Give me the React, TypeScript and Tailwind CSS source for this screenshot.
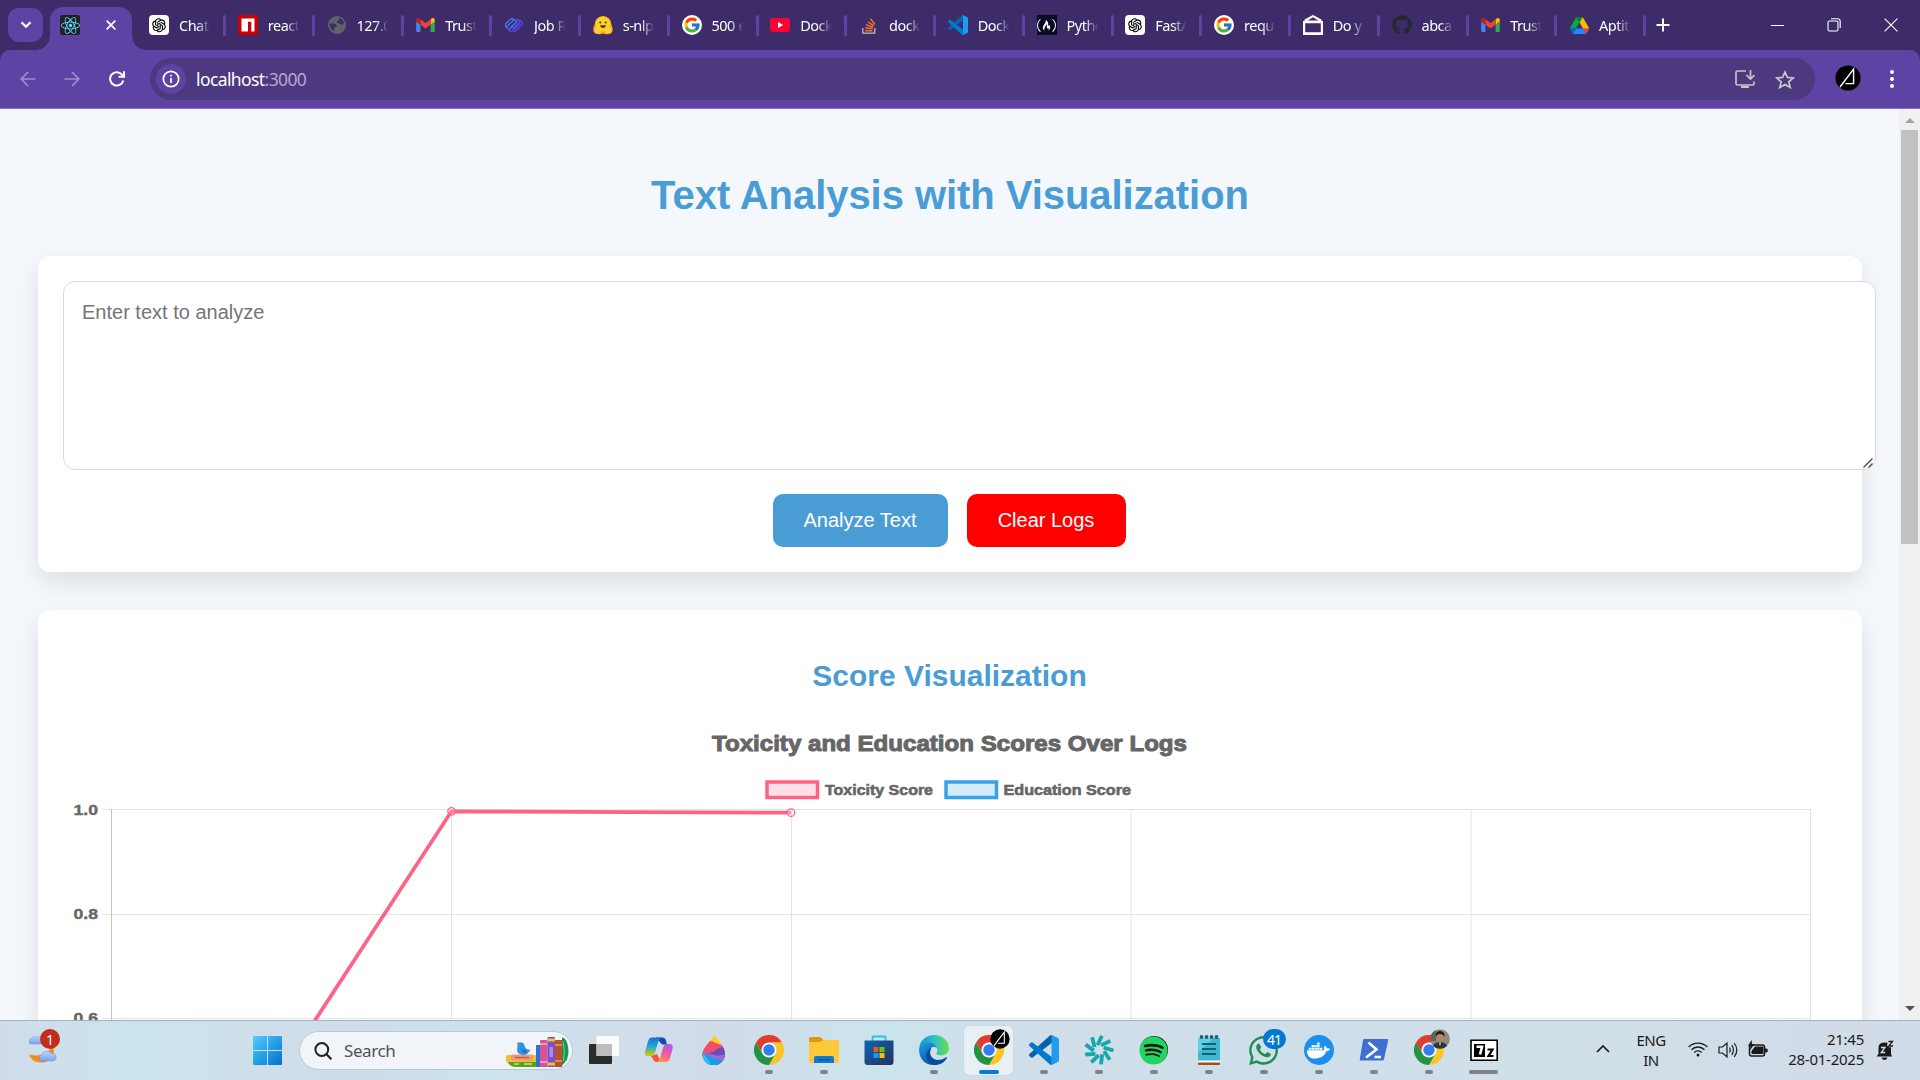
import type { ReactNode } from "react";
import { FaReact, FaGithub, FaDocker, FaSpotify, FaWhatsapp, FaFreeCodeCamp } from "react-icons/fa";
import { FcGoogle } from "react-icons/fc";
import { AiOutlineOpenAI } from "react-icons/ai";

/* ---------- brand icons ---------- */

const Gmail = () => (
  <svg viewBox="52 42 88 66" className="h-[14px] w-[19px]">
    <path fill="#4285f4" d="M58 108h14V74L52 59v43c0 3.32 2.69 6 6 6" />
    <path fill="#34a853" d="M120 108h14c3.32 0 6-2.69 6-6V59l-20 15" />
    <path fill="#fbbc04" d="M120 48v26l20-15v-8c0-7.42-8.47-11.65-14.4-7.2" />
    <path fill="#ea4335" d="M72 74V48l24 18 24-18v26L96 92" />
    <path fill="#c5221f" d="M52 51v8l20 15V48l-5.6-4.2c-5.94-4.45-14.4-.22-14.4 7.2" />
  </svg>
);

const Drive = () => (
  <svg viewBox="0 0 87.3 78" className="h-[17px] w-[19px]">
    <path fill="#0066da" d="m6.6 66.85 3.85 6.65c.8 1.4 1.95 2.5 3.3 3.3l13.75-23.8h-27.5c0 1.55.4 3.1 1.2 4.5z" />
    <path fill="#00ac47" d="m43.65 25-13.75-23.8c-1.35.8-2.5 1.9-3.3 3.3l-25.4 44a9.06 9.06 0 0 0-1.2 4.5h27.5z" />
    <path fill="#ea4335" d="m73.55 76.8c1.35-.8 2.5-1.9 3.3-3.3l1.6-2.75 7.65-13.25c.8-1.4 1.2-2.95 1.2-4.5h-27.502l5.852 11.5z" />
    <path fill="#00832d" d="m43.65 25 13.75-23.8c-1.35-.8-2.9-1.2-4.5-1.2h-18.5c-1.6 0-3.15.45-4.5 1.2z" />
    <path fill="#2684fc" d="m59.8 53h-32.3l-13.75 23.8c1.35.8 2.9 1.2 4.5 1.2h50.8c1.6 0 3.15-.45 4.5-1.2z" />
    <path fill="#ffba00" d="m73.4 26.5-12.7-22c-.8-1.4-1.95-2.5-3.3-3.3l-13.75 23.8 16.15 28h27.45c0-1.55-.4-3.1-1.2-4.5z" />
  </svg>
);

const VsCode = ({ className }: { className: string }) => (
  <svg viewBox="0 0 100 100" className={className}>
    <path fill="#0065a9" d="M96.5 10.6 75.9.9a6.2 6.2 0 0 0-7.1 1.2L1.3 63.6a4.2 4.2 0 0 0 0 6.1l5.5 5a4.2 4.2 0 0 0 5.3.2L93.4 13.4c2.7-2.1 6.6-.1 6.6 3.3v-.2c0-2.5-1.4-4.7-3.5-5.9z" />
    <path fill="#007acc" d="M96.5 89.4 75.9 99.1a6.2 6.2 0 0 1-7.1-1.2L1.3 36.4a4.2 4.2 0 0 1 0-6.1l5.5-5a4.2 4.2 0 0 1 5.3-.2L93.4 86.6c2.7 2.1 6.6.1 6.6-3.3v.2c0 2.5-1.4 4.7-3.5 5.9z" />
    <path fill="#1f9cf0" d="M75.9 99.1a6.2 6.2 0 0 1-7.1-1.2c2.3 2.3 6.2.7 6.2-2.6V4.7c0-3.3-3.9-4.9-6.2-2.6a6.2 6.2 0 0 1 7.1-1.2l20.6 9.9a6.2 6.2 0 0 1 3.5 5.6v67.2a6.2 6.2 0 0 1-3.5 5.6z" />
  </svg>
);

const Chrome = () => (
  <svg viewBox="0 0 48 48" className="size-[30px]">
    <path fill="#e33b2e" d="M3.2 12A24 24 0 0 1 44.8 12H24A12 12 0 0 0 13.6 30Z" />
    <path fill="#fdc521" d="M44.8 12A24 24 0 0 1 24 48L34.4 30A12 12 0 0 0 24 12Z" />
    <path fill="#229342" d="M3.2 12A24 24 0 0 0 24 48L34.4 30A12 12 0 0 1 13.6 30Z" />
    <circle cx="24" cy="24" r="11.6" fill="#fff" />
    <circle cx="24" cy="24" r="9.2" fill="#327df2" />
  </svg>
);

const OpenAi = () => (
  <span className="flex size-5 items-center justify-center rounded-[4px] bg-white">
    <AiOutlineOpenAI className="size-[18px] text-black" />
  </span>
);

const GoogleG = () => (
  <span className="flex size-5 items-center justify-center rounded-full bg-white">
    <FcGoogle className="size-[18px]" />
  </span>
);

const Npm = () => (
  <svg viewBox="0 0 20 20" className="size-5">
    <path fill="#cb0000" d="M0 0h20v20H0z" />
    <path fill="#fff" d="M3.5 3.5h13v13h-3.2V6.800H10v9.700H3.500z" />
  </svg>
);

const Globe = () => (
  <svg viewBox="0 0 20 20" className="size-5">
    <circle cx="10" cy="10" r="9" fill="#5f6368" />
    <path fill="#3d2c69" d="M2.500 8.500H7q1.500 0 2.500 1.500t-.5 2H7.500v2.500q0 1-1.500 1-3.500-2-3.500-7zM11.500 2.800c2.800.4 5 2.600 5.500 5.700l-1.500 1.300q-1 .5-1.800-.8-.7-1-2.200-.8-1.700.2-1.700-1.200t1.200-1.500q1 0 .8-1.200z" />
  </svg>
);

const Ribbon = () => (
  <svg viewBox="0 0 20 20" className="size-5" fill="none" strokeWidth="1.400" strokeLinecap="round">
    <path stroke="#4277e4" d="M1.500 9 6.500 4.200a2.200 2.200 0 0 1 3 .1M3 11.500 9.500 5.200a1.700 1.700 0 0 1 2.400 2.400L6.500 12.800M1.500 9q-.6 2 1.500 4M5 14.500l3.500-3.200" />
    <path stroke="#5646e6" d="M13.500 4.500a2 2 0 0 1 1.500 3L8.500 13.800M16 6a2.400 2.400 0 0 1 1.800 3.800l-6 5.700a2.200 2.200 0 0 1-3.200.2M10.300 14l5.500-5.200M4.500 13.500a2 2 0 0 0 3 2.300" />
  </svg>
);

const HuggingFace = () => (
  <svg viewBox="0 0 20 20" className="size-5">
    <path fill="#f5b31c" d="M10 1a8.200 8.200 0 0 1 8.300 8.600c1.200 2.500 2 5 .9 7.400-1.500 2.600-6.600 2.700-9.200 1.200-2.600 1.500-7.700 1.400-9.200-1.200-1.100-2.400-.3-4.900.9-7.400A8.200 8.200 0 0 1 10 1z" />
    <circle cx="10" cy="9" r="7.200" fill="#ffd21e" />
    <path fill="#ffcf3a" d="M1.500 14.500 4 11l4.500 4.500L7 18.200H3zM18.500 14.500 16 11l-4.500 4.500 1.500 2.700h4z" />
    <path fill="#3a3b45" d="M7.200 10.300h5.600c0 1.600-1.200 2.700-2.800 2.700s-2.800-1.100-2.800-2.700z" />
    <circle cx="7.300" cy="7.500" r="1.100" fill="#3a3b45" />
    <circle cx="12.700" cy="7.500" r="1.100" fill="#3a3b45" />
  </svg>
);

const YouTube = () => (
  <svg viewBox="0 0 20 20" className="size-5">
    <rect y="3" width="20" height="14" rx="3.200" fill="#ff0033" />
    <path fill="#fff" d="M8 7v6l5.200-3z" />
  </svg>
);

const StackOverflow = () => (
  <svg viewBox="0 0 20 20" className="size-5" fill="none">
    <path stroke="#bcbbbb" strokeWidth="1.300" d="M3.800 13v5.200h12V13" />
    <path stroke="#e9702a" strokeWidth="1.600" d="M6 15.800h7.500M6.200 12.900l7.400.9M7 9.800l7 2.400M9 6.800l5.800 4M11.500 3.800l4.500 5.600" />
  </svg>
);

const FreeCodeCamp = () => (
  <span className="flex size-5 items-center justify-center bg-[#0a0a23]">
    <FaFreeCodeCamp className="size-[19px] text-white" />
  </span>
);

const Envelope = () => (
  <svg viewBox="0 0 20 20" className="size-5">
    <path fill="#fff" fillRule="evenodd" d="M10 0l8.500 4.500V6H20v14H0V6h1.500V4.500zM10 2.200 4.500 5.600h11zM2.200 8.300v8.900h15.600V8.300z" />
  </svg>
);

/* Black round avatar with a thin triangular mark */
const Avatar = ({ className }: { className: string }) => (
  <svg viewBox="0 0 26 26" className={className}>
    <circle cx="13" cy="13" r="12.600" fill="#000" />
    <path d="M5 22 18.600 4v14.600H10.500" fill="none" stroke="#fff" strokeWidth="1.400" />
  </svg>
);

/* ---------- tab strip ---------- */

const tabs: { title: string; icon: ReactNode }[] = [
  { title: "ChatG", icon: <OpenAi /> },
  { title: "react", icon: <Npm /> },
  { title: "127.0", icon: <Globe /> },
  { title: "Trust", icon: <Gmail /> },
  { title: "Job R", icon: <Ribbon /> },
  { title: "s-nlp", icon: <HuggingFace /> },
  { title: "500 e", icon: <GoogleG /> },
  { title: "Dock", icon: <YouTube /> },
  { title: "dock", icon: <StackOverflow /> },
  { title: "Dock", icon: <VsCode className="size-5" /> },
  { title: "Pytho", icon: <FreeCodeCamp /> },
  { title: "FastA", icon: <OpenAi /> },
  { title: "requ", icon: <GoogleG /> },
  { title: "Do y", icon: <Envelope /> },
  { title: "abca", icon: <FaGithub className="size-5 text-[#24292f]" /> },
  { title: "Trust", icon: <Gmail /> },
  { title: "Aptit", icon: <Drive /> },
];

const TabStrip = () => (
  <div className="flex h-[50px] bg-[#3d2c69]">
    <div className="ml-2 mt-2 flex h-[34px] w-[35px] items-center justify-center rounded-[11px] bg-[#5d43a4]">
      <svg viewBox="0 0 12 8" className="h-[8px] w-[12px]" fill="none" stroke="#fff" strokeWidth="2.200">
        <path d="m1.500 1.200 4.500 4.500 4.500-4.500" />
      </svg>
    </div>
    <div className="relative ml-[7px] mt-[7px] flex h-[43px] w-[82px] items-start rounded-t-[13px] bg-[#5d43a4] pl-[10px] pt-2">
      <span className="absolute -left-[14px] bottom-0 size-[14px] bg-[radial-gradient(circle_at_0_0,transparent_13.500px,#5d43a4_14px)]" />
      <span className="absolute -right-[14px] bottom-0 size-[14px] bg-[radial-gradient(circle_at_100%_0,transparent_13.500px,#5d43a4_14px)]" />
      <span className="flex size-5 items-center justify-center rounded-[2px] bg-[#222]">
        <FaReact className="size-[19px] text-[#61dafb]" />
      </span>
      <svg viewBox="0 0 10 10" className="ml-[26px] mt-[5px] size-[10px]" stroke="#fff" strokeWidth="1.800">
        <path d="m.6.6 8.800 8.800M9.400.6.600 9.400" />
      </svg>
    </div>
    <div className="ml-[17px] flex pt-[15px]">
      {tabs.map((tab, i) => (
        <div key={i} className="flex w-[88.750px]">
          <span className="flex size-5 shrink-0 items-center justify-center">{tab.icon}</span>
          <span className="ml-[10px] w-[32px] overflow-hidden whitespace-nowrap font-['Noto_Sans',sans-serif] text-[14.500px] leading-[21px] tracking-[-0.500px] text-white [mask-image:linear-gradient(to_right,#000_55%,transparent_98%)]">
            {tab.title}
          </span>
          <span className="ml-[12px] h-[21px] w-[3px] rounded-full bg-[#5d43a4]" />
        </div>
      ))}
    </div>
    <svg viewBox="0 0 14 14" className="-ml-[2px] mt-[18px] size-[14px]" stroke="#fff" strokeWidth="2">
      <path d="M7 .5v13M.5 7h13" />
    </svg>
    <div className="ml-auto flex items-center gap-[43px] pr-[22px]">
      <span className="h-px w-[13px] bg-white" />
      <svg viewBox="0 0 14 14" className="size-[14px]" fill="none" stroke="#fff" strokeWidth="1.100">
        <rect x="1" y="3" width="10" height="10" rx="1.500" />
        <path d="M4 .8h6.500A2.700 2.700 0 0 1 13.200 3.500V10" />
      </svg>
      <svg viewBox="0 0 14 14" className="size-[14px]" stroke="#fff" strokeWidth="1.100">
        <path d="m.6.600 12.800 12.800M13.400.6.600 13.400" />
      </svg>
    </div>
  </div>
);

/* ---------- toolbar ---------- */

const Toolbar = () => (
  <div className="bg-[#3d2c69]">
    <div className="flex h-[59px] items-start rounded-t-[10px] border-b border-[#8a6fc0] bg-[#5d43a4] pt-2">
      <svg viewBox="0 0 16 16" className="ml-5 mt-[13px] size-4" fill="none" stroke="#a08dcb" strokeWidth="1.700">
        <path d="M15.500 8H1.500M8 1 1.200 8 8 15" />
      </svg>
      <svg viewBox="0 0 16 16" className="ml-[28px] mt-[13px] size-4" fill="none" stroke="#a08dcb" strokeWidth="1.700">
        <path d="M.5 8h14M8 1l6.800 7L8 15" />
      </svg>
      <svg viewBox="0 0 16 16" className="ml-[29px] mt-[13px] size-4" fill="none" stroke="#fff" strokeWidth="2">
        <path d="M14.300 9.500A6.700 6.700 0 1 1 13 3.600l1.500 1.600" />
        <path d="M15 .3v5.500H9.500" />
      </svg>
      <div className="ml-[25px] flex h-[42px] w-[1665px] items-center rounded-full bg-[#4c397f] pl-[6px]">
        <span className="flex size-[30px] items-center justify-center rounded-full bg-[#5d43a4]">
          <svg viewBox="0 0 18 18" className="size-[18px]" fill="none" stroke="#fff" strokeWidth="1.700">
            <circle cx="9" cy="9" r="7.700" />
            <path d="M9 8v5M9 4.800v1.800" />
          </svg>
        </span>
        <span className="ml-[10px] mt-px font-['Noto_Sans',sans-serif] text-[17.500px] tracking-[-0.600px] text-white">
          localhost<span className="text-[#b5a8d4]">:3000</span>
        </span>
        <svg viewBox="0 0 20 18" className="ml-auto h-[18px] w-5" fill="none" stroke="#c7c5c5" strokeWidth="1.700">
          <path d="M11 1H2.500Q1 1 1 2.500v11Q1 15 2.500 15h15q1.500 0 1.500-1.500V11.500M15.500 0v8.500M11.500 5l4 4 4-4" />
          <path d="M6 16h8v2H6z" fill="#c7c5c5" stroke="none" />
        </svg>
        <svg viewBox="0 0 20 19" className="ml-5 mr-5 h-[19px] w-5" fill="none" stroke="#c7c5c5" strokeWidth="1.700">
          <path d="m10 2 2.400 5.400 5.900.5-4.500 3.900 1.400 5.700L10 14.400l-5.200 3.100 1.400-5.700L1.700 7.900l5.900-.5z" />
        </svg>
      </div>
      <Avatar className="ml-5 mt-[7px] size-[26px]" />
      <div className="ml-[29px] mt-3 flex flex-col gap-[3px]">
        <span className="size-1 rounded-full bg-white" />
        <span className="size-1 rounded-full bg-white" />
        <span className="size-1 rounded-full bg-white" />
      </div>
    </div>
  </div>
);

/* ---------- chart ---------- */

const gridX = [111.5, 451.5, 791.5, 1131, 1471, 1810.5];
const gridY = [809.5, 914.5, 1018.5];
const heavy = {
  fontFamily: '"Liberation Sans", Arial, sans-serif',
  fontWeight: 700,
  fill: "#666",
  stroke: "#666",
  lengthAdjust: "spacingAndGlyphs",
} as const;

const ScoreChart = () => (
  <svg viewBox="63 720 1774 320" className="h-[320px] w-[1774px]">
    <text x="712" y="751" fontSize="22.500" textLength="475" strokeWidth="1" {...heavy}>
      Toxicity and Education Scores Over Logs
    </text>
    <rect x="767" y="782" width="50.500" height="15.500" fill="#ffe0e6" stroke="#ff6384" strokeWidth="3.500" />
    <text x="825" y="795" fontSize="15" textLength="108" strokeWidth="0.600" {...heavy}>
      Toxicity Score
    </text>
    <rect x="946" y="782" width="50.500" height="15.500" fill="#d7ecfb" stroke="#36a2eb" strokeWidth="3.500" />
    <text x="1003.500" y="795" fontSize="15" textLength="127.500" strokeWidth="0.600" {...heavy}>
      Education Score
    </text>
    {gridY.map((y) => (
      <path key={y} d={`M102 ${y}H1811`} stroke="#e3e3e3" />
    ))}
    {gridX.map((x) => (
      <path key={x} d={`M${x} 809V1040`} stroke={x === 111.5 ? "#c4c4c4" : "#e3e3e3"} />
    ))}
    {["1.0", "0.8", "0.6"].map((label, i) => (
      <text key={label} x="73.500" y={815 + i * 104.1} fontSize="15" textLength="24.500" strokeWidth="0.400" {...heavy}>
        {label}
      </text>
    ))}
    <path d="M111.500 1332 451.500 811.300 791 812.700" fill="none" stroke="#ff6384" strokeWidth="3.750" />
    <circle cx="451.500" cy="811.300" r="3.750" fill="#ffe0e6" fillOpacity="0.200" stroke="#ff6384" strokeWidth="1.250" />
    <circle cx="791" cy="812.700" r="3.750" fill="#ffe0e6" fillOpacity="0.400" stroke="#ff6384" strokeWidth="1.250" />
  </svg>
);

/* ---------- page ---------- */

const Page = () => (
  <div className="flex h-[911px] overflow-hidden bg-[#f4f8fd] font-['Liberation_Sans',Arial,sans-serif]">
    <main className="flex h-[911px] w-[1899px] flex-col overflow-hidden px-[38px] pt-[63px]">
      <h1 className="pl-px text-center text-[40px] font-bold leading-[46px] tracking-[-0.050px] text-[#4a9cd5]">
        Text Analysis with Visualization
      </h1>
      <section className="mt-[38px] h-[316px] w-[1824px] shrink-0 rounded-[12px] bg-white px-[25px] pt-[25px] shadow-[0_10px_25px_rgba(0,0,0,0.1)]">
        <div className="relative w-[1813px]">
          <textarea
            placeholder="Enter text to analyze"
            className="block h-[189px] w-[1813px] resize-none rounded-[12px] border border-[#dadada] bg-white px-[18px] pt-[19px] text-[20px] leading-[23px] placeholder:text-[#757575]"
          />
          <svg viewBox="0 0 10 10" className="absolute bottom-[2px] right-[3px] size-[10px]" fill="none" stroke="#4a4a4a" strokeWidth="1.400">
            <path d="M.5 9.500 9.500.500M5.500 9.500l4-4" />
          </svg>
        </div>
        <div className="mt-6 flex justify-center gap-[19px] pr-[2px]">
          <button className="h-[53px] w-[175px] rounded-[10px] bg-[#4a9cd5] pb-[2px] text-[20px] text-white">Analyze Text</button>
          <button className="h-[53px] w-[159px] rounded-[10px] bg-[#ff0000] pb-[2px] text-[20px] text-white">Clear Logs</button>
        </div>
      </section>
      <section className="mt-[38px] h-[700px] w-[1824px] shrink-0 rounded-[12px] bg-white px-[25px] pt-[48px] shadow-[0_10px_25px_rgba(0,0,0,0.1)]">
        <h2 className="pr-px text-center text-[30px] font-bold leading-[35px] text-[#4a9cd5]">Score Visualization</h2>
        <div className="mt-[27px]">
          <ScoreChart />
        </div>
      </section>
    </main>
    <div className="flex w-[21px] flex-col items-center bg-[#f0f0f0]">
      <svg viewBox="0 0 10 5" className="mt-[9px] h-[5px] w-[10px]">
        <path fill="#a3a3a3" d="M0 5 5 0l5 5z" />
      </svg>
      <div className="mt-[7px] h-[414px] w-[17px] bg-[#c1c1c1]" />
      <svg viewBox="0 0 10 5" className="mb-[9px] mt-auto h-[5px] w-[10px]">
        <path fill="#505050" d="M0 0h10L5 5z" />
      </svg>
    </div>
  </div>
);

/* ---------- taskbar icons ---------- */

const Weather = () => (
  <svg viewBox="0 0 34 34" className="size-[34px]">
    <defs>
      <linearGradient id="cloud" x1="0" y1="0" x2="0" y2="1">
        <stop offset="0" stopColor="#b9d3fb" />
        <stop offset="1" stopColor="#7da4ec" />
      </linearGradient>
    </defs>
    <path fill="#f08c17" d="M28 9c3 10-2 17.500-12 17.500-6 0-10-3-12-8 11 3 20-1 24-9.500z" />
    <path fill="url(#cloud)" stroke="#6b93df" strokeWidth="0.500" d="M4.500 8a4 4 0 0 1 2.500-5A6 6 0 0 1 16 1.500l2 6.500-3 1H5a4 4 0 0 1-.5-1z" transform="translate(0 -1)" />
    <path fill="url(#cloud)" stroke="#6b93df" strokeWidth="0.500" d="M16.500 25a3.400 3.400 0 0 1 .5-6.500 5.500 5.500 0 0 1 9.500-1 3.800 3.800 0 0 1 1.500 7.500z" />
  </svg>
);

const WindowsLogo = () => (
  <svg viewBox="0 0 29 33" className="h-[33px] w-[29px]">
    <defs>
      <linearGradient id="win" x1="0" y1="0" x2="1" y2="1">
        <stop offset="0" stopColor="#4ed0ff" />
        <stop offset="1" stopColor="#0070cf" />
      </linearGradient>
    </defs>
    <path fill="url(#win)" d="M1 0h13v14H0V1q0-1 1-1zM15 0h13q1 0 1 1v13H15zM0 15h14v14H1q-1 0-1-1zM15 15h14v13q0 1-1 1H15z" />
  </svg>
);

const Books = () => (
  <svg viewBox="0 0 64 32" className="h-8 w-16">
    <path d="M1 25h33v6H9q-6-1-8-6z" fill="#5f9e1e" />
    <path d="M8 28h5M18 28h8" stroke="#a6d854" strokeWidth="2" />
    <rect x="0" y="19" width="32" height="7" rx="1.500" fill="#f2c12e" />
    <rect x="5" y="18.500" width="22" height="6" rx="1" fill="#f0967c" />
    <path d="M9 21.500h14" stroke="#c4584e" strokeWidth="1.300" />
    <path fill="#2d95e8" d="M11.500 7c4-2 7 0 7.500 4l1.500 2 4 1-3 3.500c-3 2.500-8 1.500-10-1.500-1-3 .5-5 0-9z" />
    <path fill="#1a6fc4" d="M15 13l6 2-2 3z" />
    <path fill="#f59b23" d="m11 5 1.500 3.500-1.500 1z" />
    <rect x="30" y="9" width="4.500" height="22" fill="#2874d8" />
    <rect x="34" y="4" width="7.500" height="27" rx="1" fill="#d8529a" />
    <path d="M34 8h7.500M34 26h7.500" stroke="#f5b4d2" strokeWidth="1.500" />
    <rect x="41.500" y="1" width="7.500" height="30" rx="1" fill="#7b4dc9" />
    <path d="M41.500 4h7.500M41.500 28h7.500" stroke="#f2c12e" strokeWidth="3" />
    <rect x="43.500" y="11" width="3.500" height="10" fill="#b18bea" />
    <rect x="49" y="4" width="7" height="27" fill="#b5532a" />
    <path d="M49 9h7M49 25h7" stroke="#e8a04a" strokeWidth="1.500" />
    <path fill="#1f9150" d="M56 1.500q3 0 5 5 3 9 0 17-2 3-5 6z" />
    <path d="M57 6q2.500 9 .5 19" stroke="#7ccf90" fill="none" />
  </svg>
);

const TaskView = () => (
  <svg viewBox="0 0 30 30" className="size-[30px]">
    <rect y="9" width="23" height="20" rx="1" fill="#2c2c2c" />
    <rect x="7.500" y="1" width="22.500" height="20" rx="1" fill="#fbfbfb" />
    <path fill="#bdbdbd" d="M7.500 9H23v12H7.500z" />
  </svg>
);

const Copilot = () => (
  <svg viewBox="0 0 30 30" className="size-[30px]">
    <defs>
      <linearGradient id="cpA" x1="0" y1="0" x2="0" y2="1">
        <stop offset="0" stopColor="#1c6fe0" />
        <stop offset="0.500" stopColor="#23a8d0" />
        <stop offset="0.800" stopColor="#8fc44a" />
        <stop offset="1" stopColor="#f3bb1c" />
      </linearGradient>
      <linearGradient id="cpB" x1="0.700" y1="0" x2="0.300" y2="1">
        <stop offset="0" stopColor="#a95bee" />
        <stop offset="0.500" stopColor="#ee5a9c" />
        <stop offset="1" stopColor="#fb9a4b" />
      </linearGradient>
    </defs>
    <path fill="#1748b8" d="M12 2.500h7q2 0 3 3l1 4h-5z" />
    <path fill="url(#cpA)" d="M8 2.500h9q-2 1-3 5l-3 10q-1 3.500-4 3.500H4c-3 0-3.500-2-2.500-6L4 6.500q1-4 4-4z" />
    <path fill="#f05a34" d="M7 21l6-2 4 8h-5q-2 0-3-3z" />
    <path fill="url(#cpB)" d="M22.500 9H26q3.500 0 2.500 5l-2.500 9q-1 4-4 4h-9q2-1 3-4l3-10q1-4 3.500-4z" />
  </svg>
);

const PaintDrop = () => (
  <svg viewBox="0 0 30 30" className="size-[30px]">
    <defs>
      <clipPath id="drop">
        <path d="M15 0c3 5 11 11 11 19a11 11 0 0 1-22.500 0C3.500 12 12 7 15 0z" />
      </clipPath>
    </defs>
    <g clipPath="url(#drop)">
      <path fill="#fbd30d" d="M0 0h30v30H0z" />
      <path fill="#f24b6b" d="M0 9Q10 4 16 7.500T30 10v20H0z" />
      <path fill="#6a4bc0" d="M0 17Q12 20 17 15T30 14v16H0z" />
      <path fill="#a368d8" d="M0 17Q9 18 15 20T30 18v12H0z" />
      <path fill="#1b9de6" d="M0 18Q8 19 14 22.500T30 23v7H0z" />
      <path fill="#2bc0f4" d="M0 17Q8 20 12 30H0z" />
    </g>
  </svg>
);

const Folder = () => (
  <svg viewBox="0 0 30 30" className="size-[30px]">
    <path fill="#dc9a0a" d="M1.500 2H10q1.500 0 2.500 1l2 2H28v8H0V3.500Q0 2 1.500 2z" />
    <path fill="#fcc93c" d="M0 7h11l3.500-2H30v21.500q0 1.500-1.500 1.500h-27Q0 28 0 26.500z" />
    <path fill="#0f7ad0" d="M5 28v-5q0-2 2-2h16q2 0 2 2v5z" />
    <path d="M9 25h12.500" stroke="#0b4f96" strokeWidth="1.200" />
  </svg>
);

const Store = () => (
  <svg viewBox="0 0 30 30" className="size-[30px]">
    <defs>
      <linearGradient id="store" x1="0" y1="0" x2="1" y2="1">
        <stop offset="0" stopColor="#0b66b2" />
        <stop offset="1" stopColor="#25305c" />
      </linearGradient>
    </defs>
    <path d="M8.500 6.500V2q0-.5.500-.5h12q.5 0 .5.500v4.500" fill="none" stroke="#2ec0ee" strokeWidth="1.800" />
    <path fill="url(#store)" d="M.500 5.500h29V27q0 3-3 3h-23q-3 0-3-3z" />
    <path fill="#f25022" d="M9.500 12h5v5h-5z" />
    <path fill="#7fba00" d="M15.500 12h5v5h-5z" />
    <path fill="#00a4ef" d="M9.500 18h5v5h-5z" />
    <path fill="#ffb900" d="M15.500 18h5v5h-5z" />
  </svg>
);

const Edge = () => (
  <svg viewBox="0 0 30 30" className="size-[30px]">
    <defs>
      <linearGradient id="edgeTop" x1="0" y1="0.500" x2="1" y2="0.500">
        <stop offset="0" stopColor="#1f8fd8" />
        <stop offset="0.500" stopColor="#2fc0c4" />
        <stop offset="1" stopColor="#66e04c" />
      </linearGradient>
      <linearGradient id="edgeLeft" x1="0" y1="0" x2="0.500" y2="1">
        <stop offset="0" stopColor="#1da0e4" />
        <stop offset="1" stopColor="#0b56b0" />
      </linearGradient>
    </defs>
    <path fill="url(#edgeTop)" d="M.300 12C1.500 5 7.500 0 15 0c8.500 0 15 6 15 13 0 4.500-3.500 7.500-8 7.500-3.500 0-5.200-1.200-4.500-2.400 1.200-2 1-3.700.2-5.300C15.500 8.500 6 6.500.3 12z" />
    <path fill="url(#edgeLeft)" d="M.100 15C0 9 5 7.500 9 7.500c5 0 8.500 3 8.900 6-1-1.700-2.900-2-4.400-1.500C8 14 7 27 18 29.700 8 31.500 0 25 .1 15z" />
    <path fill="#0d4a9b" d="M12.500 12.500C8.500 20 14 26 21 24.800c2.600-.5 4.500-1.500 6.500-2.600.5-.2.800.2.500.8C25.500 27.500 21 30 16 30c-7-1-9.500-7-8.500-11.500.7-3 2.500-5 5-6z" />
  </svg>
);

const Pinwheel = () => (
  <svg viewBox="0 0 30 30" className="size-[30px]" stroke="#15a8a8" strokeWidth="3.800">
    {[0, 40, 80, 120, 160, 200, 240, 280, 320].map((a) => (
      <path key={a} d="M13.500 10 18 .8" transform={`rotate(${a} 15 15)`} />
    ))}
  </svg>
);

const Spotify = () => (
  <span className="flex size-[28px] items-center justify-center rounded-full bg-[#191414]">
    <FaSpotify className="size-[29px] shrink-0 text-[#1ed760]" />
  </span>
);

const Notepad = () => (
  <svg viewBox="0 0 30 30" className="size-[30px]">
    <path fill="#3fb8d0" d="M4 3h22v23H4z" />
    <path fill="#63cfe2" d="M4 3h15L4 18z" />
    <path d="M8 9h14M8 14h14M8 19h14" stroke="#116079" strokeWidth="1.800" />
    <path fill="#fff" d="M4 25.500h22V28H4z" />
    <path fill="#a6500f" d="M4 27.500h22V29q0 1-1 1H5q-1 0-1-1z" />
    {[7.5, 12.5, 17.5, 22.5].map((x) => (
      <circle key={x} cx={x} cy="2" r="1.900" fill="#17637a" />
    ))}
  </svg>
);

const WhatsApp = () => <FaWhatsapp className="size-[33px] shrink-0 text-[#1f8f56]" />;

const Docker = () => (
  <span className="flex size-[30px] items-center justify-center rounded-full bg-[#1d90ee]">
    <FaDocker className="size-[23px] text-white" />
  </span>
);

const PowerShell = () => (
  <svg viewBox="0 0 30 30" className="size-[30px]">
    <path fill="#3f6fd0" d="M5 4h23.500q1 0 .7 1.200L25 24q-.3 1.500-1.500 1.500H1.500Q.5 25.500.8 24L4 5.200Q4.200 4 5 4z" />
    <path d="m9.500 7.500 8 7-10.500 8M15.500 22h6.500" fill="none" stroke="#fff" strokeWidth="2.600" />
  </svg>
);

const SevenZip = () => (
  <svg viewBox="0 0 30 30" className="size-[30px]">
    <path fill="#fff" stroke="#000" strokeWidth="1.600" d="M2 5.300h26.200v20H2z" />
    <path fill="#000" d="M5 9h11v13H5z" />
    <path d="M7.500 11.800h5.500L11 19.500" fill="none" stroke="#fff" strokeWidth="2.600" />
    <path d="M18.500 14.500h5l-4 6.500h5" fill="none" stroke="#000" strokeWidth="2.200" />
  </svg>
);

/* Small round portrait shown over a browser icon */
const Portrait = () => (
  <svg viewBox="0 0 20 20" className="absolute -right-[6px] -top-[6px] size-5">
    <clipPath id="face">
      <circle cx="10" cy="10" r="9.800" />
    </clipPath>
    <g clipPath="url(#face)">
      <path fill="#8b8a7c" d="M0 0h20v20H0z" />
      <path fill="#5c6650" d="M0 0h6v12H0z" />
      <path fill="#2e3542" d="M2 20q1-7 8-7t8 7z" />
      <ellipse cx="10" cy="8.500" rx="3.500" ry="4.500" fill="#b58469" />
      <path fill="#231d1b" d="M6 8Q5 2 10 2t4.500 6Q13 5 10 5T6 8z" />
      <path fill="#dfe3ea" d="m9 13.500 1 3.500 1-3.500z" />
    </g>
  </svg>
);

const apps: { icon: ReactNode; mark?: "dot" | "active" | "wide" }[] = [
  { icon: <TaskView /> },
  { icon: <Copilot /> },
  { icon: <PaintDrop /> },
  { icon: <Chrome />, mark: "dot" },
  { icon: <Folder />, mark: "dot" },
  { icon: <Store /> },
  { icon: <Edge />, mark: "dot" },
  {
    icon: (
      <>
        <Chrome />
        <Avatar className="absolute -right-[6px] -top-[6px] size-5" />
      </>
    ),
    mark: "active",
  },
  { icon: <VsCode className="size-[30px]" />, mark: "dot" },
  { icon: <Pinwheel />, mark: "dot" },
  { icon: <Spotify />, mark: "dot" },
  { icon: <Notepad />, mark: "dot" },
  {
    icon: (
      <>
        <WhatsApp />
        <span className="absolute -right-[7px] -top-[6px] flex h-5 w-[23px] items-center justify-center rounded-full bg-[#0078d4] font-['Noto_Sans',sans-serif] text-[14px] tracking-[-1px] text-white">
          41
        </span>
      </>
    ),
    mark: "dot",
  },
  { icon: <Docker />, mark: "dot" },
  { icon: <PowerShell />, mark: "dot" },
  {
    icon: (
      <>
        <Chrome />
        <Portrait />
      </>
    ),
    mark: "dot",
  },
  { icon: <SevenZip />, mark: "wide" },
];

const markClass = {
  dot: "h-1 w-2 rounded-full bg-[#7b8388]",
  active: "h-1 w-5 rounded-full bg-[#0a78d6]",
  wide: "h-1 w-[29px] rounded-full bg-[#7b8388]",
};

const Taskbar = () => (
  <div className="flex h-[60px] border-t border-[#a5b1bd] bg-[linear-gradient(90deg,#d0dcea_0%,#cbe4ec_7%,#cfdfea_14%,#cfdcea_19%,#cbe3ed_25%,#d2ddea_32%,#d0dce9_38%,#cbe4ec_46%,#d0deea_53%,#cfdfea_65%,#d0dfe8_80%,#d1dbe7_100%)] font-['Noto_Sans',sans-serif] text-[#1b1b1b]">
    <div className="relative ml-[25px] mt-[15px] h-[34px] w-[34px]">
      <Weather />
      <span className="absolute left-[15px] top-[-7px] flex size-[20px] items-center justify-center rounded-full bg-[#c42b1c] text-[14px] text-white">
        1
      </span>
    </div>
    <div className="ml-[194px] mt-[15px]">
      <WindowsLogo />
    </div>
    <div className="ml-[17px] mt-[10px] flex h-[39px] w-[274px] items-center rounded-full border border-[#b9c8d3] bg-[#f1f5fa] pl-[14px] pr-[2px]">
      <svg viewBox="0 0 18 18" className="size-[18px]" fill="none" stroke="#1f1f1f" strokeWidth="2">
        <circle cx="7.800" cy="7.500" r="6.400" />
        <path d="m12.300 12 5 5.300" />
      </svg>
      <span className="ml-[12px] mt-px text-[17px] tracking-[-0.400px] text-[#4f5255]">Search</span>
      <span className="ml-auto mt-[2px]">
        <Books />
      </span>
    </div>
    <div className="ml-[3px] flex">
      {apps.map((app, i) => (
        <div
          key={i}
          className={
            app.mark === "active"
              ? "mx-[3px] mt-[5px] flex h-[49px] w-[49px] flex-col items-center rounded-[5px] bg-[#e8eff5] pt-[9px] shadow-[0_0_1px_rgba(0,0,0,0.200)]"
              : "mt-[5px] flex h-[49px] w-[55px] flex-col items-center pt-[9px]"
          }
        >
          <div className="relative flex size-[30px] shrink-0 items-center justify-center">{app.icon}</div>
          {app.mark && <span className={"mt-[5px] shrink-0 " + markClass[app.mark]} />}
        </div>
      ))}
    </div>
    <div className="ml-auto flex pr-[26px]">
      <svg viewBox="0 0 14 8" className="mr-[26px] mt-[24px] h-[8px] w-[14px]" fill="none" stroke="#1b1b1b" strokeWidth="1.700">
        <path d="m1 7 6-6 6 6" />
      </svg>
      <div className="mt-[9px] w-[30px] text-center text-[15px] leading-5 tracking-[-0.500px]">
        <div>ENG</div>
        <div>IN</div>
      </div>
      <svg viewBox="0 0 20 16" className="ml-[22px] mt-[20px] h-4 w-5" fill="none" stroke="#1b1b1b" strokeWidth="1.400">
        <path d="M.7 6a13 13 0 0 1 18.600 0M3.500 8.800a9 9 0 0 1 13 0M6.200 11.500a5.300 5.300 0 0 1 7.600 0" />
        <circle cx="10" cy="14" r="1.500" fill="#1b1b1b" stroke="none" />
      </svg>
      <svg viewBox="0 0 20 18" className="ml-[10px] mt-5 h-[18px] w-5" fill="none" stroke="#1b1b1b" strokeWidth="1.200">
        <path d="M1 6h3.500L9 2v14l-4.500-4H1zM11.500 6.500q1.500 2.500 0 5M13.800 4.200q3.200 4.800 0 9.600M16.200 2q5.200 7 0 14" />
      </svg>
      <svg viewBox="0 0 20 17" className="ml-[10px] mt-[19px] h-[17px] w-5">
        <rect x="1.500" y="5" width="15" height="11" rx="2" fill="none" stroke="#1b1b1b" strokeWidth="1.500" />
        <path fill="#1b1b1b" d="M7 6.500h8.500V14h-12v-3zM17 8.500h1.500q1.300 0 1.300 2t-1.300 2H17zM3.500 0 0 6h2.500L1.800 10.500 6.500 4H4z" />
      </svg>
      <div className="ml-[16px] mt-[8px] w-[80px] whitespace-nowrap text-right text-[15px] leading-5 tracking-[-0.250px]">
        <div>21:45</div>
        <div>28-01-2025</div>
      </div>
      <svg viewBox="0 0 18 20" className="ml-[12px] mt-[19px] h-5 w-[18px]">
        <path fill="#1b1b1b" d="M2.500 14V7.500Q2.500 2.500 9 2.500t6 5V14l1 2.500H.5zM5.500 17.500h6Q10.500 20 8.500 20t-3-2.500z" />
        <path d="M5 7.500h4L5.200 12.500h4" fill="none" stroke="#d1dbe7" strokeWidth="1.300" />
        <path d="M12 .5h5.500v6l-4 1-2.500-2z" fill="#d1dbe7" />
        <path d="M12.500 1.500h4L12.800 6h4.200" fill="none" stroke="#1b1b1b" strokeWidth="1.300" />
      </svg>
    </div>
  </div>
);

export default function App() {
  return (
    <div className="flex h-[1080px] w-[1920px] flex-col overflow-hidden">
      <TabStrip />
      <Toolbar />
      <Page />
      <Taskbar />
    </div>
  );
}
